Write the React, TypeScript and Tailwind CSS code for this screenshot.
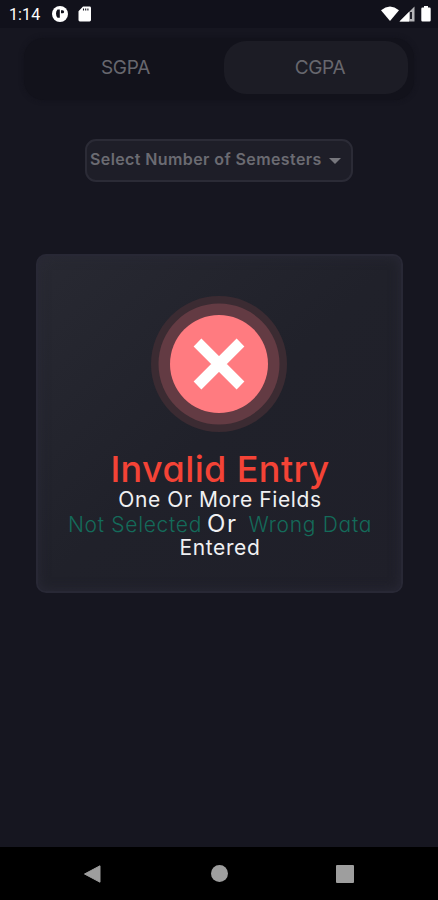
import { useState } from 'react';

const TABS = [
    { value: 'SGPA', size: 'w-[194px] pr-[3px]' },
    { value: 'CGPA', size: 'w-[184px] pl-[8px]' },
];

function StatusBar() {
    return (
        <header className="flex h-7 shrink-0 items-center bg-[#11111b] pr-[7px] pl-[9px] text-white">
            <span className="mt-[2px] w-[43px] font-['Roboto',sans-serif] text-base tracking-[0.1px]">1:14</span>
            <svg className="h-4 w-4" viewBox="0 0 16 16">
                <circle cx="8" cy="8" r="8" fill="#fff" />
                <path d="M5.5 3.600h2.300v8.200H5.500Q4 10 4 7.500T5.500 3.600z" fill="#11111b" />
                <path d="M9 4.300h1.600a1.500 1.500 0 0 1 0 3H9z" fill="#11111b" />
            </svg>
            <svg className="ml-[10px] h-4 w-[14px]" viewBox="0 0 14 16">
                <path d="M5 .5h6.600A1.400 1.400 0 0 1 13 1.900v12.200a1.400 1.400 0 0 1-1.400 1.400H1.900A1.400 1.400 0 0 1 .500 14.100V5.300z" fill="#fff" />
                <path d="M5.500 2.500v2M7.700 2.500v2M9.900 2.500v2" stroke="#11111b" strokeWidth="1.100" />
            </svg>
            <div className="ml-auto flex items-center">
                <svg className="h-4 w-[18px]" viewBox="0 0 18 16">
                    <path d="M0 4.200Q9-3 18 4.200L9 15z" fill="#fff" />
                </svg>
                <svg className="h-4 w-4" viewBox="0 0 16 16">
                    <path d="M15.500.500v15H.500z" fill="#b5b5b8" />
                    <path d="M10 6v9.500H.500z" fill="#fff" />
                    <path d="M12 6v7" stroke="#11111b" strokeWidth="1.800" />
                </svg>
                <svg className="ml-[6px] h-4 w-[10px]" viewBox="0 0 10 16">
                    <path d="M3 0h4v1.500h1.500a1.200 1.200 0 0 1 1.200 1.200v11.600a1.200 1.200 0 0 1-1.200 1.200h-7A1.200 1.200 0 0 1 .300 14.300V2.700a1.200 1.200 0 0 1 1.200-1.200H3z" fill="#fff" />
                </svg>
            </div>
        </header>
    );
}

function ErrorIcon() {
    return (
        <svg className="h-[138px] w-[138px]" viewBox="0 0 138 138">
            <circle cx="69" cy="69" r="68" fill="#3b2b32" />
            <circle cx="69" cy="69" r="60.500" fill="#633b43" />
            <circle cx="69" cy="69" r="49" fill="#ff7b80" />
            <path d="M47.500 47.500l43 43M90.500 47.500l-43 43" stroke="#fff" strokeWidth="11" />
        </svg>
    );
}

function NavBar() {
    return (
        <footer className="flex h-[53px] shrink-0 items-center justify-between bg-black pr-[84px] pl-[83px]">
            <svg className="h-[18px] w-[18px]" viewBox="0 0 18 18">
                <path d="M1.500 9L17 .800v16.400z" fill="#9e9e9e" stroke="#9e9e9e" strokeLinejoin="round" />
            </svg>
            <span className="ml-px h-[17px] w-[17px] rounded-full bg-[#9e9e9e]" />
            <span className="h-[18px] w-[18px] rounded-[1px] bg-[#9e9e9e]" />
        </footer>
    );
}

export default function App() {
    const [activeTab, setActiveTab] = useState('CGPA');

    return (
        <div className="flex h-[900px] w-[438px] flex-col overflow-hidden bg-[#161620] font-['Inter',sans-serif] [font-feature-settings:'cv11','ss03']">
            <StatusBar />

            <main className="flex flex-1 flex-col items-center">
                <div className="mt-[10px] flex h-[62px] w-[390px] rounded-[20px] bg-[#12121b] px-[6px] py-[3px] shadow-[0_0_5px_#12121b]">
                    {TABS.map(({ value, size }) => (
                        <button
                            key={value}
                            type="button"
                            onClick={() => setActiveTab(value)}
                            className={`h-[53px] shrink-0 rounded-[22px] pt-[2px] text-[19px] tracking-[-0.3px] text-[#67676e] ${size} ${activeTab === value ? 'bg-[#1c1c25]' : ''}`}
                        >
                            {value}
                        </button>
                    ))}
                </div>

                <button
                    type="button"
                    className="mt-[39px] flex h-[43px] w-[268px] items-center rounded-[11px] border-2 border-[#2b2b36] bg-[#1e1e28] pb-[3px] pl-[3px] text-[#6b6b72]"
                >
                    <span className="w-[239px] text-left text-base font-semibold tracking-[0.4px] whitespace-nowrap">Select Number of Semesters</span>
                    <svg className="mt-[3px] h-[6px] w-3" viewBox="0 0 12 6">
                        <path d="M0 0h12L6 6z" fill="#77777d" />
                    </svg>
                </button>

                <section className="mt-[72px] flex h-[339px] w-[367px] flex-col items-center rounded-[10px] border-2 border-[#282835] bg-linear-to-br from-[#282932] via-[#20212a] to-[#1f1f29] pt-[39px] shadow-[inset_0_0_12px_#292936]">
                    <ErrorIcon />
                    <h1 className="mt-[18px] pl-[2px] text-[36px] leading-[37px] font-medium tracking-[0.4px] whitespace-nowrap text-[#f44336]">Invalid Entry</h1>
                    <p className="flex flex-col items-center pl-[2px] text-[21px] leading-6 tracking-[0.6px] whitespace-nowrap text-[#f0f0f2]">
                        <span>One Or More Fields</span>
                        <span className="flex h-6 items-baseline">
                            <span className="font-light tracking-[0.7px] text-[#146b5a]">Not Selected</span>
                            <span className="mr-[11px] ml-[5px] text-[24px] leading-6 tracking-[1.5px]">Or</span>
                            <span className="font-light tracking-[0.7px] text-[#146b5a]">Wrong Data</span>
                        </span>
                        <span>Entered</span>
                    </p>
                </section>
            </main>

            <NavBar />
        </div>
    );
}
